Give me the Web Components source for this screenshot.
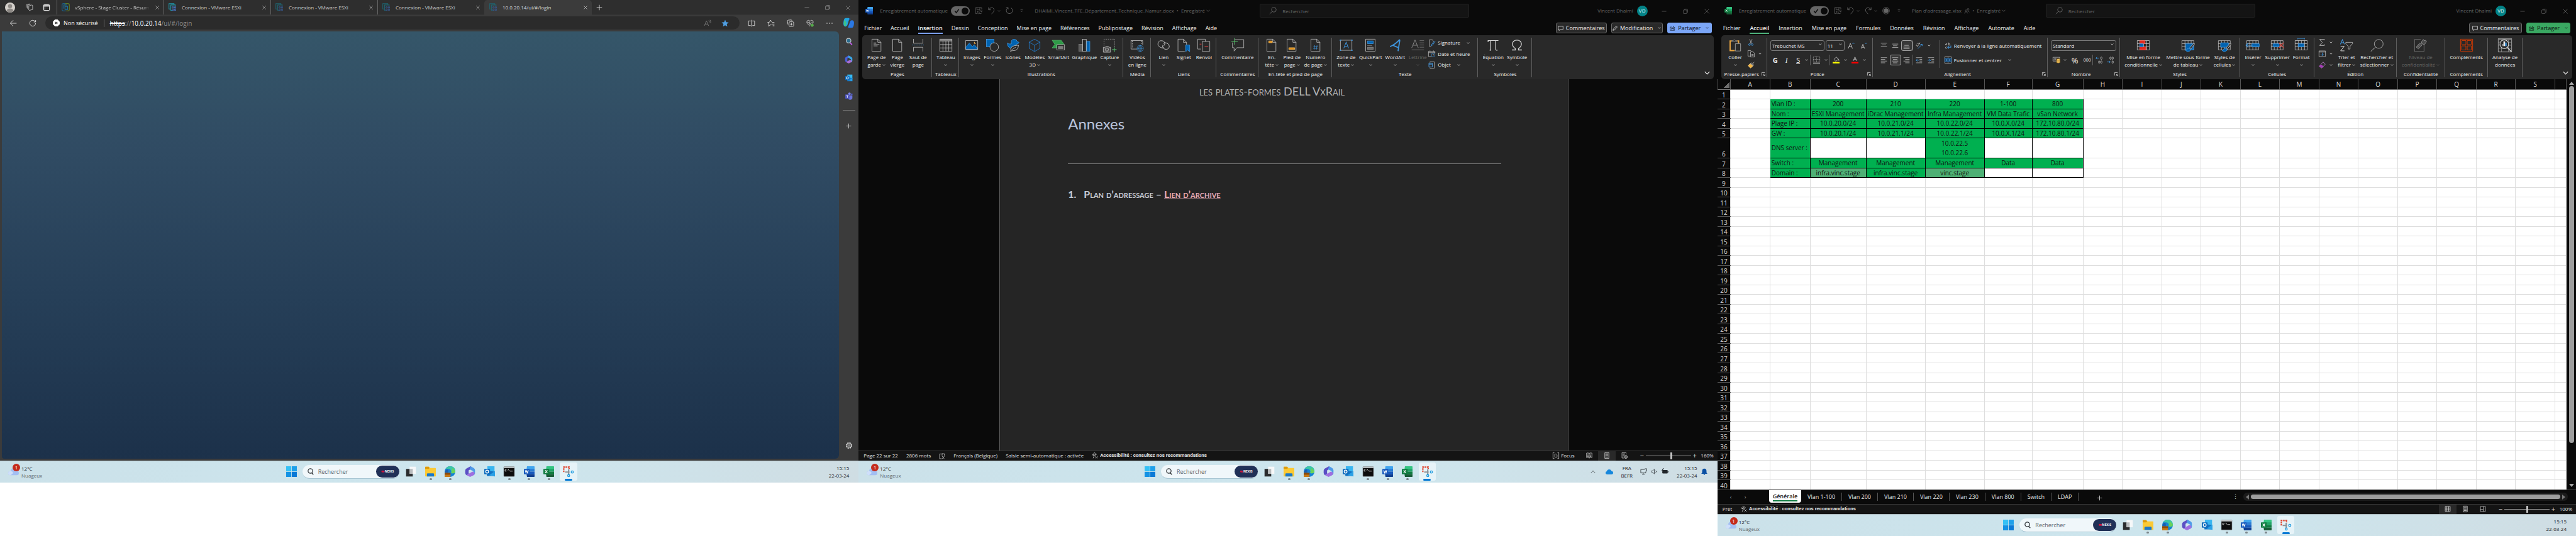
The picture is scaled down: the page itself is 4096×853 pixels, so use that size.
<!DOCTYPE html>
<html lang="fr">
<head>
<meta charset="utf-8">
<title>Bureau trois écrans</title>
<style>
  html, body { margin: 0; height: 100%; background: #fff; }
  body { font: 8px/12px "Open Sans", "Noto Sans", sans-serif; overflow: hidden; }
</style>
</head>
<body>
<desk-wall>
  <desk-screen slot="a"><edge-window></edge-window><win-taskbar></win-taskbar></desk-screen>
  <desk-screen slot="b"><word-window></word-window><win-taskbar tray></win-taskbar></desk-screen>
  <desk-screen slot="c"><excel-window></excel-window><win-taskbar></win-taskbar></desk-screen>
</desk-wall>

<script>
/* ---------- icon library: name -> [viewBox width, height, markup] ---------- */
const S = '#d6d6d6', B = '#0063b1', L = '#4ba0e8';
const page = `<path d="M3.5.5h13l7 7v20h-20z" fill="none" stroke="${S}"/><path d="M16.5.5v7h7" fill="none" stroke="${S}"/>`;
const grid = `<path d="M.5 3.5h27v21H.5zM7.500 3.500v21M14.500 3.500v21M21.500 3.500v21M.5 10.500h27M.5 17.500h27" fill="none" stroke="${S}"/>`;
const brush = `<path d="M27 10 18 20l2.500 3L29 12q1-3-2-2z" fill="#292929" stroke="${S}"/><path d="M17 21q-4-1-5 3-1 2-3 2 4 4 8 2 4-2 3-5z" fill="${B}" stroke="${L}"/>`;
const lines = (a) => `<path d="${a.map(([x, y, w]) => `M${x} ${y}h${w}`).join('')}" stroke="${S}" fill="none"/>`;
const esx = `<g fill="none"><path d="M12 3V1H1v12h2" stroke="var(--c1,#1f9db0)" stroke-width="1.500"/><path d="M15 6V4H5v12h2" stroke="var(--c1,#1f9db0)" stroke-width="1.500"/><path d="M8 8h3v3H8zM13 8h3v3h-3zM8 13h3v3H8zM13 13h3v3h-3z" stroke="var(--c2,#4a78c8)" stroke-width="1.300"/></g>`;
const ICONS = {
  caret: [6, 4, `<path d="M.8.8 3 3 5.200.8" fill="none" stroke="currentColor" stroke-width="1.100"/>`],
  chevdown: [12, 8, `<path d="M1 1.500 6 6.500 11 1.500" fill="none" stroke="currentColor" stroke-width="1.600"/>`],
  min: [14, 14, `<path d="M2 7h10" stroke="currentColor"/>`],
  restore: [14, 14, `<rect x="2" y="4" width="8" height="8" rx="1.500" fill="none" stroke="currentColor"/><path d="M4.500 4V3Q4.500 2 6 2h4.500Q12 2 12 3.500V9q0 1-1.500 1" fill="none" stroke="currentColor"/>`],
  close: [14, 14, `<path d="M2 2l10 10M12 2 2 12" stroke="currentColor" stroke-width="1.100"/>`],
  plus: [14, 14, `<path d="M7 1v12M1 7h12" stroke="currentColor" stroke-width="1.200"/>`],
  avatar: [22, 22, `<circle cx="11" cy="11" r="11" fill="#d4d0cb"/><circle cx="11" cy="8" r="4.500" fill="#8e8a86"/><path d="M3.500 18q1-5 7.500-5t7.500 5q-3 4-7.500 4t-7.500-4z" fill="#8e8a86"/>`],
  spaces: [18, 18, `<g fill="none" stroke="#c4c4c4" stroke-width="1.200"><path d="M8 6l7-2 1.500 1v9L9 16l-1-1z"/><path d="M5 12V5l7-3M2.500 10V4L9 1.500"/></g>`],
  tabact: [18, 18, `<rect x="2" y="2" width="14" height="14" rx="2" fill="none" stroke="#fff" stroke-width="1.500"/><path d="M2 5h14" stroke="#fff" stroke-width="3"/><path d="M5 5v11" stroke="#fff" stroke-width="1"/>`],
  vsphere: [18, 18, `<g fill="none" stroke-width="1.700"><path d="M10 17H4q-3 0-3-3V4q0-3 3-3h4" stroke="#1d5f86"/><path d="M8 1h6q3 0 3 3v10q0 3-3 3h-4" stroke="#5d7a26"/><path d="M11 4H5v8M7.500 7H13v7H7.500z" stroke="#1d6f9a"/></g>`],
  esxi: [18, 18, esx],
  back: [18, 18, `<path d="M17 9H2M9 2 2 9l7 7" fill="none" stroke="#e8e8e8" stroke-width="1.300"/>`],
  reload: [18, 18, `<path d="M16 9a7 7 0 1 1-2.500-5.500L16 6M16 1.500V6h-4.500" fill="none" stroke="#e8e8e8" stroke-width="1.300"/>`],
  unsafe: [16, 16, `<path d="M5 0h6l5 5v6l-5 5H5l-5-5V5z" fill="#fff"/><path d="M5.500 5.500l5 5M10.500 5.500l-5 5" stroke="#222" stroke-width="1.600"/>`],
  readaloud: [18, 18, `<path d="M1.500 15 6.500 3l5 12M3 11h7M12 2q2 2 1.500 5M15 1q2.500 3 1.500 8" fill="none" stroke="#8b8b8b" stroke-width="1.100"/>`],
  star: [18, 18, `<path d="M9 .8l2.500 5.500 6 .7-4.500 4 1.200 6L9 14l-5.200 3L5 11 .5 7l6-.7z" fill="#4f9de0"/>`],
  split: [18, 18, `<g fill="none" stroke="#e4e4e4" stroke-width="1.300"><path d="M7 3.500H1.700v11H7M11 3.500h5.300v11H11M9 1v16"/></g>`],
  favs: [18, 18, `<path d="M10 12 7 13.500 3 16l1-5L1 7l4.500-.8L8 1.500l2 4M11 7h6M12 11h5M13 15h4" fill="none" stroke="#e4e4e4" stroke-width="1.300"/>`],
  coll: [18, 18, `<g fill="none" stroke="#e4e4e4" stroke-width="1.300"><rect x="5.500" y="5.500" width="11" height="11" rx="2"/><path d="M11 8v6M8 11h6M3 12 1.500 4Q1.500 2 3.500 1.700L11 1l1.500 2"/></g>`],
  health: [18, 18, `<path d="M9 16 2 9Q0 3 5 2q3 0 4 2 1-2 4-2 5 1 3 7l-1 1M1 8h4l2-3 2 7 2-4h4" fill="none" stroke="#e4e4e4" stroke-width="1.200"/><circle cx="14" cy="14" r="3.700" fill="#55a84b"/>`],
  dots: [18, 18, `<g fill="#e4e4e4"><rect x="2" y="8" width="2" height="2"/><rect x="8" y="8" width="2" height="2"/><rect x="14" y="8" width="2" height="2"/></g>`],
  copilot: [24, 24, `<path d="M6 1h6q2 0 1 3l-4 13q-1 3-4 3-5 0-5-7 0-6 2-10Q3 1 6 1z" fill="#22a7e0"/><path d="M1 13q0-5 2-9l4 8-2 8Q1 19 1 13z" fill="#3cc28c"/><path d="M18 23h-6q-2 0-1-3l4-11q1-3 4-3 5 0 5 6 0 5-2 9-1 2-4 2z" fill="#2a78e4"/><path d="M14 1q2 0 2 4h-4z" fill="#1a5fb4"/>`],
  lens: [18, 18, `<circle cx="8" cy="7" r="5.500" fill="#2c6d8e" stroke="#b9c0c4" stroke-width="2"/><path d="M12 12l4 5" stroke="#c05bec" stroke-width="3"/>`],
  m365: [18, 18, `<path d="M9 .5 2.500 4Q1 5 1 7v4q0 3 2 4l3-2V7l6-3z" fill="#4a5fd6"/><path d="M9 .5 15.500 4Q17 5 17 7v5q0 3-3 4V9L8 5z" fill="#3aa6e8"/><path d="M3 15l6 3 6-3q1-1 1-3l-4-2-6 3z" fill="#a86fd6"/><path d="M7 7l4 2.500L7 12z" fill="#3b3b3b"/>`],
  outlook: [18, 18, `<path d="M5 1h12v10H5z" fill="#35b8f1"/><path d="M4 8l13 1v8H5z" fill="#1579c9"/><path d="M17 9 9 15l8 2z" fill="#28a0e4"/><rect y="4" width="10" height="10" rx="1" fill="#0f6cbd"/><circle cx="5" cy="9" r="2.600" fill="none" stroke="#fff" stroke-width="1.500"/>`],
  teams: [18, 18, `<circle cx="10" cy="3.500" r="3" fill="#7b83eb"/><circle cx="15.500" cy="4.500" r="2" fill="#5059c9"/><path d="M6 7h11v6q0 4-5 4.500Q6 17 6 13z" fill="#6a73dc"/><rect y="5" width="10" height="10" rx="1" fill="#4b53bc"/><path d="M2.500 8h5M5 8v5" stroke="#fff" stroke-width="1.400"/>`],
  gear: [18, 18, `<circle cx="9" cy="9" r="6.500" fill="none" stroke="#ddd" stroke-width="2.200" stroke-dasharray="3.400 1.700"/><circle cx="9" cy="9" r="5" fill="none" stroke="#ddd"/><circle cx="9" cy="9" r="2" fill="none" stroke="#ddd"/>`],
  /* taskbar */
  start: [24, 24, `<path d="M0 0h11.400v11.400H0z" fill="#35c1f5"/><path d="M12.600 0H24v11.400H12.600z" fill="#1ea0ea"/><path d="M0 12.600h11.400V24H0z" fill="#1492e4"/><path d="M12.600 12.600H24V24H12.600z" fill="#0a79d6"/>`],
  mag: [16, 16, `<circle cx="8" cy="6.500" r="5.300" fill="none" stroke="#2b2f33" stroke-width="1.800"/><path d="M11 11l4 4" stroke="#2b2f33" stroke-width="2"/>`],
  cloud: [26, 18, `<path d="M6 17q-6 0-6-5t6-5q1-7 8-7 6 0 7 6 5 1 5 6 0 5-5 5z" fill="#a3bff2"/><path d="M6 17q-6 0-6-5t6-5q5 0 6 5z" fill="#cfdffa"/>`],
  taskview: [24, 24, `<rect x="1" y="6" width="15" height="17" fill="#2a2c2e"/><rect x="9" y="1" width="14" height="16" fill="#f6f8f9"/><rect x="9" y="6" width="7" height="11" fill="#b9bcbe"/>`],
  folder: [24, 24, `<path d="M0 2q0-1 1-1h7l3 3h12q1 0 1 1v17q0 1-1 1H1q-1 0-1-1z" fill="#fbc934"/><path d="M0 2q0-1 1-1h7l2 3-2 2H0z" fill="#dd9a0d"/><path d="M4 23v-5q0-2 2-2h12q2 0 2 2v5z" fill="#1b78c9"/>`],
  edge: [24, 24, `<circle cx="12" cy="12" r="12" fill="#1683d2"/><path d="M2 6Q6 0 12 0q12 0 12 11 0 5-6 5-5 0-3-4-1-6-7-6-4 0-6 0z" fill="#3fc6a6"/><path d="M24 11q0 5-6 5-4 0-3-3l3-9z" fill="#6ad25a"/><path d="M8 12q0 8 6 12Q4 24 1 16q-2-6 4-9 4 0 3 5z" fill="#1a5fb0"/><path d="M0 15h13v9H0z" fill="#c77a16"/><path d="M0 15h13v4H0z" fill="#8a4b0c"/>`],
  office: [24, 24, `<path d="M13 0 4 5Q1 7 1 10v5q0 3 3 5l5-3V9l8-5z" fill="#5b4fc4"/><path d="M13 0l7 4q3 2 3 5v6q0 4-4 5v-9l-8-4z" fill="#4f9be8"/><path d="M4 20l8 4 8-4q3-2 2-6l-5-2-8 5z" fill="#9f6fe0"/><path d="M9 9l6 3-6 4z" fill="#cfe5ed"/>`],
  mail: [24, 24, `<path d="M7 0h16v12H7z" fill="#39b6f0"/><path d="M5 10l19 2v10H6z" fill="#1475c5"/><path d="M24 11 11 20l13 3z" fill="#2aa1e6"/><rect y="6" width="13" height="12" rx="1" fill="#0f6cbd"/><circle cx="6.500" cy="12" r="3.200" fill="none" stroke="#fff" stroke-width="1.800"/>`],
  cmd: [24, 24, `<rect x="0" y="1" width="24" height="22" rx="1" fill="#0d0d0d" stroke="#8a8f93"/><path d="M0 1h24v3H0z" fill="#c5cacc"/><path d="M3 8h3M3 8v3h3M8 8v1M10 7l3 4M14 11h6" stroke="#e6e6e6" stroke-width="1.200" fill="none"/>`],
  word: [24, 24, `<path d="M7 0h16q1 0 1 1v6H6z" fill="#41a5ee"/><path d="M6 6h18v6H6z" fill="#2b7cd3"/><path d="M6 12h18v6H6z" fill="#185abd"/><path d="M6 18h18v5q0 1-1 1H7z" fill="#103f91"/><rect y="6" width="13" height="12" rx="1" fill="#185abd"/><path d="M3 9l1.700 6L6.500 10l1.800 5L10 9" fill="none" stroke="#fff" stroke-width="1.500"/>`],
  excel: [24, 24, `<path d="M7 0h16q1 0 1 1v6H6z" fill="#33c481"/><path d="M6 6h18v6H6z" fill="#21a366"/><path d="M6 12h18v6H6z" fill="#107c41"/><path d="M6 18h18v5q0 1-1 1H7z" fill="#185c37"/><rect y="6" width="13" height="12" rx="1" fill="#107c41"/><path d="M4 9l5 6M9 9l-5 6" fill="none" stroke="#fff" stroke-width="1.700"/>`],
  snip: [24, 24, `<path d="M2 13V2h12v4" fill="none" stroke="#e0402a" stroke-width="3" stroke-dasharray="3.500 1.500"/><path d="M5 13h10M13 7v12" stroke="#8c9297" stroke-width="3"/><circle cx="21" cy="13" r="2.500" fill="none" stroke="#1e9be0" stroke-width="1.800"/><circle cx="13" cy="21" r="2.300" fill="none" stroke="#1e9be0" stroke-width="1.800"/>`],
  up: [12, 8, `<path d="M1 7l5-5 5 5" fill="none" stroke="#2b3034" stroke-width="1.500"/>`],
  onedrive: [18, 12, `<path d="M4 12q-4 0-4-4 0-3 3-3.500Q4 0 9 0q4 0 5 4 4 0 4 4t-4 4z" fill="#1687dc"/>`],
  net: [18, 18, `<path d="M12 3.500H1.500v9h13V9M5 16h7M8 12.500V16M12 1.500h5v4h-1.500V9" fill="none" stroke="#23282c" stroke-width="1.300"/>`],
  mute: [18, 18, `<path d="M2 7h3l4-4v12l-4-4H2zM12 7l4 4M16 7l-4 4" fill="none" stroke="#23282c" stroke-width="1.200"/>`],
  battery: [18, 18, `<rect x="2" y="5" width="14" height="9" rx="2" fill="#23282c"/><rect x="16" y="8" width="2" height="3" fill="#23282c"/><path d="M5 0 1 7h4L3 13" fill="none" stroke="#23282c" stroke-width="1.800"/>`],
  bell: [14, 16, `<path d="M7 1q5 0 5 6v3l2 3H0l2-3V7q0-6 5-6zM5 14h4q-.5 2-2 2t-2-2z" fill="#0a4fa3"/>`],
  /* office title bar */
  save: [18, 18, `<path d="M6 16H2.500Q1.500 16 1.500 15V2.500q0-1 1-1h13q1 0 1 1V6M5 1.500V7h7V1.500M6 16v-5h2" fill="none" stroke="currentColor" stroke-width="1.200"/><path d="M9 11q3-4 7-1M17 8v3h-3M17 14q-3 4-7 1M9 17v-3h3" fill="none" stroke="currentColor" stroke-width="1.200"/>`],
  undo: [16, 18, `<path d="M1 1v6h6M1.500 6.500Q6 0 11 2q5 3 3 8-1 2-6 7" fill="none" stroke="currentColor" stroke-width="1.300"/>`],
  redo: [16, 18, `<path d="M15 1v6H9M14.500 6.500Q10 0 5 2 0 5 2 10q1 2 6 7" fill="none" stroke="currentColor" stroke-width="1.300"/>`],
  repeat: [18, 18, `<path d="M5 2Q1 5 1.500 10q1 6 7.500 6t7.500-6Q17 5 13 2M1 1.500h5V6" fill="none" stroke="currentColor" stroke-width="1.300"/>`],
  record: [18, 18, `<circle cx="9" cy="9" r="8" fill="none" stroke="currentColor" stroke-width="1.200"/><circle cx="9" cy="9" r="5.800" fill="currentColor"/>`],
  more: [8, 8, `<path d="M1 1h6M1.500 3.500 4 6l2.500-2.500" fill="none" stroke="currentColor" stroke-width="1.100"/>`],
  people: [14, 14, `<circle cx="10" cy="3" r="2.300" fill="none" stroke="currentColor"/><circle cx="5" cy="6.500" r="2.300" fill="none" stroke="currentColor"/><path d="M1 13q1-4 4-4t4 4M9 8q3-1 4 2" fill="none" stroke="currentColor"/>`],
  search: [16, 16, `<circle cx="10" cy="6" r="5" fill="none" stroke="currentColor" stroke-width="1.200"/><path d="M6.500 9.500 1 15" stroke="currentColor" stroke-width="1.200"/>`],
  bubble: [14, 12, `<path d="M1 1h12v8H6l-3 2.500V9H1z" fill="none" stroke="currentColor" stroke-width="1.200"/>`],
  pen: [12, 12, `<path d="M1 11l1-3.500L9 .8 11.200 3 4.500 10z" fill="none" stroke="currentColor" stroke-width="1.200"/>`],
  share: [14, 12, `<path d="M5 3H1v8h11V8M4 8q1-4 5-4V1.500L13 5 9 8.500V6.500Q6 6 4 8z" fill="none" stroke="currentColor" stroke-width="1.100"/>`],
  check: [10, 10, `<path d="M1.500 5 4 8l4.500-6" fill="none" stroke="#111" stroke-width="1.700"/>`],
  /* word ribbon */
  cover: [28, 28, page + `<path d="M7 8h6v2.500H7z" fill="#8a8a8a"/>` + lines([[7, 12.500, 13], [7, 15.500, 9]])],
  blank: [28, 28, page],
  pagebreak: [28, 28, `<path d="M3.500 0v9.500h21V0M3.500 28V18.500h21V28" fill="none" stroke="${S}"/><path d="M0 13.500h28" stroke="#3f95dd" stroke-dasharray="2.500 1.500"/>`],
  table: [28, 28, `<path d="M.5.5h27v4H.5z" fill="#6e6e6e"/><path d="M.5.5h27v27H.5zM.5 4.500h27M7.500 4.500v23M14 4.500v23M20.500 4.500v23M.5 12.500h27M.5 20h27" fill="none" stroke="${S}"/>`],
  image: [28, 28, `<path d="M1 23V18l8-9 6 8 5-4 7 8v2z" fill="${B}" stroke="${L}"/><path d="M.5 3.500h27v20H.5z" fill="none" stroke="${S}"/><path d="M21 6q-1 4 3 4-4 2-5-1 0-2 2-3z" fill="#f0b050"/>`],
  shapes: [28, 28, `<rect x=".5" y=".5" width="17" height="17" fill="${B}" stroke="${L}"/><circle cx="18" cy="18" r="9.500" fill="#292929" stroke="${S}"/>`],
  icons: [28, 28, `<path d="M1 9q3 3 9 2Q8 1 16 .6q6 0 7 5l4 2q-1 4-6 4 1 8-8 10Q1 21 1 9z" fill="${B}" stroke="${L}"/><path d="M9 27q-4-13 17-13-1 13-13 12zM7 28q7-7 13-10" fill="#292929" stroke="${S}"/>`],
  cube: [28, 28, `<path d="M14 .6 26 7v14l-12 7L2 21V7zM2 7l12 7 12-7M14 14v14" fill="none" stroke="#2479c7" stroke-width="1.300"/>`],
  smartart: [28, 28, `<path d="M0 3h20l6 8-8 9H0l6-8z" fill="#2f9a48" stroke="#58c06c"/><path d="M10.500 12.500h17v12h-17z" fill="#292929" stroke="${S}"/>` + lines([[13, 16.500, 12], [13, 18.500, 12], [13, 21.500, 12]])],
  chart: [28, 28, `<rect x="2" y="12" width="8" height="15.500" fill="#5d5d5d" stroke="#8a8a8a"/><rect x="18.500" y="5.500" width="8" height="22" fill="${B}" stroke="${L}"/><rect x="10.500" y=".5" width="8" height="27" fill="#292929" stroke="${S}"/>`],
  capture: [28, 28, `<path d="M26 18V.5H2V15" fill="none" stroke="#a5a5a5" stroke-dasharray="3 2"/><path d="M.5 18.500h4l2-2h5l2 2h3v11H.5z" fill="#4d4d4d" stroke="${S}"/><circle cx="8.500" cy="23.500" r="3.500" fill="none" stroke="${S}"/><path d="M20 24h10M25 19v10" stroke="#58c06c" stroke-width="1.500"/>`],
  video: [28, 28, `<path d="M14 22.500H.5v-19h26V13" fill="none" stroke="${S}"/><path d="M3.500 5v16M23.500 5v8" stroke="${S}" stroke-width="2" stroke-dasharray="1.500 2.500"/><circle cx="21" cy="21" r="7" fill="#292929" stroke="#3f95dd"/><path d="M14 21h14M21 14v14M21 14q-7 7 0 14M21 14q7 7 0 14" fill="none" stroke="#3f95dd"/>`],
  link: [28, 28, `<path d="M15 18q-3 4-7 1-8-4-6-10 2-6 8-5 6 0 7 6 0 3-2 5M13 10q4-3 8-1 7 3 6 8-1 6-7 6-7 0-8-6 0-2 1-4" fill="none" stroke="${S}" stroke-width="1.200"/>`],
  bookmark: [28, 28, `<path d="M16.500 27.500h-15V.5h12l7 7v5M13.500.5v7h7" fill="none" stroke="${S}"/><path d="M18.500 13.500h9v15l-4.500-4-4.500 4z" fill="${B}" stroke="${L}"/>`],
  crossref: [28, 28, `<path d="M8 22.500H.5V.5h17v5M10.500 5.500h17v22h-17z" fill="none" stroke="${S}"/><path d="M5 11.500h4M16 16.500h8" stroke="#ee4444" stroke-width="1.300"/>`],
  comment: [28, 28, `<path d="M7 1.500h20.500v18H12L6 27v-7.500H2.500V8" fill="none" stroke="${S}"/><path d="M0 5.500h14M7-2v15" stroke="#58c06c" stroke-width="1.400"/>`],
  header: [28, 28, page + `<path d="M7.500 4.500h8v4h-8z" fill="#e08e1b" stroke="#ffc760"/>`],
  footer: [28, 28, page + `<path d="M7.500 19.500h13v4h-13z" fill="#e08e1b" stroke="#ffc760"/>`],
  pagenum: [28, 28, page + `<path d="M12 14l-1.500 10M17 14l-1.500 10M9 17h10M8.500 21h10" stroke="#3f95dd" fill="none"/>`],
  textbox: [30, 28, `<path d="M2 2.500h26v23H2z" fill="none" stroke="${S}"/><path d="M.5 1h3v3h-3zM26.500 1h3v3h-3zM.5 24h3v3h-3zM26.500 24h3v3h-3z" fill="#3f95dd"/><path d="M9.500 21 15 7l5.500 14M11.500 16h7" fill="none" stroke="#3f95dd" stroke-width="1.500"/>`],
  quick: [28, 28, `<path d="M3.500.5h21v27h-21z" fill="none" stroke="${S}"/><path d="M7.500 4.500h13v6h-13z" fill="${B}" stroke="${L}"/><path d="M7 14.500h11" stroke="#999"/><path d="M7.500 18.500h13v5h-13z" fill="#6a6a6a" stroke="#999"/>`],
  wordart: [28, 28, `<path d="M3 17Q14 13 24 2q1 0 .5 3L21 27M9 14l12 5" fill="none" stroke="#3f95dd" stroke-width="2.600"/>`],
  dropcap: [30, 28, `<path d="M1 20 8.500 2 16 20M4 14h9" fill="none" stroke="#8b8b8b" stroke-width="1.400"/><path d="M19 3.500h10M19 8.500h10M19 13.500h10M19 18.500h10M1 24.500h28" stroke="#8b8b8b"/>`],
  sign: [16, 16, `<path d="M7 15.500H2.500V.5h7l3 4" fill="none" stroke="${S}"/><path d="M14.500 3 8 11l-1 3 3-1.500L16 5" fill="none" stroke="#3f95dd" stroke-width="1.400"/>`],
  datetime: [16, 16, `<path d="M8 14.500H.5v-12h15V7M.5 5.500h15M4 .5v3M12 .5v3" fill="none" stroke="${S}"/><circle cx="11.500" cy="11" r="4.200" fill="#292929" stroke="#3f95dd"/><path d="M11.500 8.500V11h2" fill="none" stroke="${S}"/>`],
  object: [16, 16, `<path d="M4 2.500V.5h10v15H4v-2" fill="none" stroke="${S}"/><path d="M1.500 3.500h8v9h-8zM1.500 6h8" fill="none" stroke="${L}" stroke-width="1.300"/>`],
  pi: [28, 28, `<path d="M3 7V3.500h23M9 4v21H6.500M20 4v19q0 2.500 4 2" fill="none" stroke="${S}" stroke-width="1.700"/>`],
  omega: [28, 28, `<path d="M3 24.500h7.500v-3Q4 17 4 11q1-8.500 10-8.500T24 11q0 6-6.500 10.500v3H25" fill="none" stroke="${S}" stroke-width="1.800"/>`],
  /* excel ribbon */
  paste: [28, 32, `<path d="M6 4.500H1.500v24H13M19 4.500h3.500V10" fill="none" stroke="#eba640" stroke-width="3"/><path d="M6 6.500v-3h3q3-4 6 0h3v3z" fill="#292929" stroke="#a5a5a5"/><path d="M14.500 11.500h13v18h-13z" fill="#292929" stroke="${S}"/>`],
  cut: [14, 16, `<path d="M4 .5l5 11M10 .5l-5 11" stroke="${S}" fill="none"/><circle cx="3.800" cy="13" r="2" fill="none" stroke="#3f95dd" stroke-width="1.300"/><circle cx="10.200" cy="13" r="2" fill="none" stroke="#3f95dd" stroke-width="1.300"/>`],
  copy: [16, 16, `<path d="M5 13.500H.5V.5h6l2 2M6.500 3.500h6l3 3v9h-9zM8.500 9.500h5M8.500 12h5" fill="none" stroke="${S}"/>`],
  painter: [16, 16, `<path d="M15 1l-5 6M12 10 6 4l2-1 6 5z" fill="none" stroke="${S}"/><path d="M5.500 5 1 9q3 5 6 6l5-5z" fill="#f0b040" stroke="#ffdf90"/>`],
  launch: [8, 8, `<path d="M.5 7V.5H7M3 3l4 4M7 3.500V7H3.500" fill="none" stroke="#ddd"/>`],
  growfont: [16, 16, `<path d="M1 15 6 3l5 12M3 11h6" fill="none" stroke="${S}" stroke-width="1.200"/><path d="M11 4l2-2.500L15 4" fill="none" stroke="#3f95dd" stroke-width="1.200"/>`],
  shrinkfont: [16, 16, `<path d="M2 15 6 5l4 10M3.500 12h5" fill="none" stroke="${S}" stroke-width="1.200"/><path d="M11 1.500 13 4l2-2.500" fill="none" stroke="#3f95dd" stroke-width="1.200"/>`],
  borders: [16, 16, `<path d="M.5.500h15v12H.5zM8 .5v12M.5 6.500h15" fill="none" stroke="${S}" stroke-dasharray="1 1"/><path d="M0 15h16" stroke="#fff" stroke-width="1.500"/>`],
  fill: [16, 16, `<path d="M3 6l6-5 4 6-6 4zM13 5q2 2 1.500 5" fill="none" stroke="${S}"/><path d="M0 12.500h16V16H0z" fill="#ff0"/>`],
  fontcolor: [16, 16, `<path d="M4 10 8 .8 12 10M5.500 7h5" fill="none" stroke="${S}" stroke-width="1.200"/><path d="M0 12.500h16V16H0z" fill="#f00"/>`],
  vtop: [16, 16, lines([[1, 2.500, 14], [3, 6.500, 10], [1, 10.500, 14]])],
  vmid: [16, 16, lines([[1, 4.500, 14], [3, 8.500, 10], [1, 12.500, 14]])],
  vbot: [16, 16, lines([[3, 7.500, 10], [1, 11.500, 14], [1, 15, 14]])],
  hleft: [16, 16, lines([[1, 2.500, 14], [1, 6.500, 10], [1, 10.500, 14], [1, 14.500, 10]])],
  hcenter: [16, 16, lines([[1, 2.500, 14], [3, 6.500, 10], [1, 10.500, 14], [3, 14.500, 10]])],
  hright: [16, 16, lines([[1, 2.500, 14], [5, 6.500, 10], [1, 10.500, 14], [5, 14.500, 10]])],
  orient: [16, 16, `<path d="M2 5l3-3M1 8l4 1M6 3l4 1M4 11 10 1" fill="none" stroke="${S}"/><path d="M5 15 15 5M15 9V5h-4" fill="none" stroke="#3f95dd" stroke-width="1.400"/>`],
  outdent: [16, 16, lines([[1, 2.500, 14], [9, 6.500, 6], [9, 10.500, 6], [1, 14.500, 14]]) + `<path d="M8 8.500H1M4 5.500l-3 3 3 3" fill="none" stroke="#3f95dd" stroke-width="1.300"/>`],
  indent: [16, 16, lines([[1, 2.500, 14], [9, 6.500, 6], [9, 10.500, 6], [1, 14.500, 14]]) + `<path d="M0 8.500h7M4 5.500l3 3-3 3" fill="none" stroke="#3f95dd" stroke-width="1.300"/>`],
  wrap: [16, 16, `<path d="M5 3v4M2 7q-1-3 3-3M9 1v6M9 4q4-1 3.500 1.500T9 7M5 11q-3 0-3 2t3 2" fill="none" stroke="${S}"/><path d="M14.500 8v4H7M10 9.500 7 12l3 3" fill="none" stroke="#3f95dd" stroke-width="1.500"/>`],
  merge: [16, 16, `<path d="M.5.500h15v15H.5zM8 .5v3M8 12.500v3" fill="none" stroke="${S}"/><path d="M.5 4h15v8H.5z" fill="#14446e" stroke="#3f95dd"/><path d="M3 8h10M5 6 3 8l2 2M11 6l2 2-2 2" fill="none" stroke="#7fc3ff"/>`],
  money: [18, 16, `<path d="M9 10.500H.5v-9h16V5M5 4q-2 0-2 2t2 2M7 8V4h2" fill="none" stroke="${S}"/><path d="M9.500 6q4-2 7.500 0v8q-4 2-7.500 0z" fill="#f3c968" stroke="#b07d1c"/><path d="M9.500 9h7.500M9.500 12h7.500" stroke="#b07d1c"/>`],
  dec1: [16, 16, `<path d="M8 3.500H1M3.500 1 1 3.500 3.500 6" fill="none" stroke="#3f95dd" stroke-width="1.300"/><rect x="12" y="1" width="3" height="5.500" rx="1.500" fill="none" stroke="${S}"/><rect x="7" y="10" width="3" height="5.500" rx="1.500" fill="none" stroke="${S}"/><rect x="12" y="10" width="3" height="5.500" rx="1.500" fill="none" stroke="${S}"/>`],
  dec2: [16, 16, `<rect x="7" y="1" width="3" height="5.500" rx="1.500" fill="none" stroke="${S}"/><rect x="12" y="1" width="3" height="5.500" rx="1.500" fill="none" stroke="${S}"/><rect x="12" y="10" width="3" height="5.500" rx="1.500" fill="none" stroke="${S}"/><path d="M0 12.500h8M5.500 10 8 12.500 5.500 15" fill="none" stroke="#3f95dd" stroke-width="1.300"/>`],
  condfmt: [28, 28, grid + `<path d="M6 3.500h12v7H6zM6 17.500h14v7H6z" fill="#e02b20" stroke="#ff6a5e"/><path d="M6 10.500h8v7H6z" fill="${B}" stroke="${L}"/>`],
  tablefmt: [30, 28, grid + `<path d="M9 10.500h18.500v14H9z" fill="${B}" stroke="${L}"/>` + brush],
  cellfmt: [30, 28, grid + `<path d="M5.500 8.500h18v10h-18z" fill="${B}" stroke="${L}"/>` + brush],
  insert: [30, 28, grid + `<path d="M12 10.500h17v7H12z" fill="${B}" stroke="${L}"/><path d="M14 14H-1M4 9l-5 5 5 5" fill="none" stroke="${L}" stroke-width="1.600"/>`],
  remove: [30, 28, grid + `<path d="M4.500 10.500h14v7h-14z" fill="${B}" stroke="${L}"/><path d="M18 8l11 12M29 8 18 20" stroke="#e0443a" stroke-width="1.600"/>`],
  format: [28, 28, grid + `<path d="M7.500 10.500h13v7h-13z" fill="${B}" stroke="${L}"/><path d="M6-.5h16M6.500-2v3M21.500-2v3" stroke="#3f95dd"/>`],
  sum: [16, 16, `<path d="M13 3V1H2l6 7-6 7h11v-2.500" fill="none" stroke="${S}" stroke-width="1.200"/>`],
  filldown: [16, 16, `<path d="M.5 1.500h15v13H.5zM.5 4h15" fill="none" stroke="${S}"/><path d="M8 5.500V12M5 9.500l3 3 3-3" fill="none" stroke="#3f95dd" stroke-width="1.400"/>`],
  erase: [16, 16, `<path d="M10 1l5 5-8 9-6-4z" fill="none" stroke="#c98fd6" stroke-width="1.200"/><path d="M5 6l6 5-4 4-6-4z" fill="#a23bb5"/>`],
  sortfilter: [28, 28, `<path d="M.5 12 5 1.500 9.500 12M2 8.500h6" fill="none" stroke="#3f95dd" stroke-width="1.500"/><path d="M1 16.500h8L1 26.500h8.500" fill="none" stroke="${S}" stroke-width="1.400"/><path d="M12.500 7.500h15v3l-5.500 6v6h-4v-6l-5.500-6z" fill="none" stroke="${S}"/>`],
  find: [30, 28, `<circle cx="19" cy="11" r="10" fill="none" stroke="${S}"/><path d="M12 18 1 28" stroke="${S}" stroke-width="1.200"/>`],
  sensitivity: [28, 28, `<path d="M14 1H.5v27h21V14" fill="none" stroke="#8b8b8b"/><path d="M4 18l8-9 5 5-8 8zM7 18l5-5M16 6l4-5 2 3 3-1 2 3-5 7-6-3z" fill="#4a4a4a" stroke="#8b8b8b" stroke-width="1.400"/>`],
  addins: [28, 28, `<path d="M.5.5h27v27H.5z" fill="none" stroke="#d83b01" stroke-width="1.300"/><path d="M3.500 3.500h9v9h-9zM15.500 3.500h9v9h-9zM3.500 15.500h9v9h-9zM15.500 15.500h9v9h-9z" fill="none" stroke="#d83b01" stroke-width="1.200"/>`],
  analyze: [32, 32, `<path d="M.5.5h31v31H.5z" fill="none" stroke="${S}"/><path d="M1 1h30v3H1z" fill="#7a7a7a"/><path d="M1 9h30M1 16h30M1 23h30M8 4v27M24 4v27" stroke="#9a9a9a"/><circle cx="14.500" cy="13.500" r="10" fill="#292929" stroke="${S}" stroke-width="1.600"/><path d="M9 13h3.500v5H9z" fill="#888"/><path d="M12.500 7h4v11h-4z" fill="#e8e8e8"/><path d="M16.500 10H20v8h-3.500z" fill="#3f95dd"/><path d="M21.500 21 31 31" stroke="${S}" stroke-width="2"/>`],
  /* status bar */
  proof: [14, 14, `<path d="M6 12.500H1.500V2H6l1-1v5M7 2l1-.5h4V6M7 7l5 6M12 7l-5 6" fill="none" stroke="#ddd"/>`],
  access: [14, 14, `<circle cx="6" cy="2.300" r="1.600" fill="none" stroke="#ddd"/><path d="M1 4l4 1.500v3L3 13M11 4 7 5.500v3M8 8l5 5M13 8l-5 5M1.500 5.500 5 7" fill="none" stroke="#ddd" stroke-width="1.100"/>`],
  focus: [14, 14, `<path d="M3.500.5h-3v13h3M10.500.5h3v13h-3M4.500 3.500h3l2 2v5h-5z" fill="none" stroke="#ddd"/>`],
  read: [14, 14, `<path d="M7 2v11M7 2Q4 .5 1 1.500v10Q4 10.500 7 12.500M7 2q3-1.500 6-.5v10q-3-1-6 1M2.500 4h3M2.500 6.500h3M2.500 9h3M8.500 4h3M8.500 6.500h3M8.500 9h3" fill="none" stroke="#ddd"/>`],
  print: [14, 14, `<path d="M2.500.5h9v13h-9zM4 3h6M4 5.500h6M4 8h6M4 10.500h6" fill="none" stroke="#eee"/>`],
  web: [14, 14, `<path d="M6 12.500H1.500V.5h9V5M3.500 3h5M3.500 5.500h4M3.500 8h3" fill="none" stroke="#ddd"/><circle cx="10" cy="10" r="3.400" fill="none" stroke="#ddd"/><path d="M6.500 10h7M10 6.500v7" stroke="#ddd"/>`],
  gridv: [14, 14, `<path d="M1.500 1.500h11v11h-11zM5 1.500v11M9 1.500v11M1.500 5h11M1.500 9h11" fill="none" stroke="#eee"/>`],
  breakv: [14, 14, `<path d="M1.500 1.500h11v11h-11zM1.500 8H8v4.500M8 8V1.500" fill="none" stroke="#ddd"/>`],
};

/* Attaches an open shadow root holding the given styles and markup. */
function mount(el, css, html) {
  const t = document.createElement('template');
  t.innerHTML = `<style>*{box-sizing:border-box}button{font:inherit;color:inherit;background:none;border:0;padding:0;margin:0;white-space:nowrap}${css}</style>${html}`;
  el.attachShadow({ mode: 'open' }).append(t.content.cloneNode(true));
}

class AppIcon extends HTMLElement {
  connectedCallback() {
    if (this.shadowRoot) return;
    const [w, h, body] = ICONS[this.getAttribute('name')];
    const size = +this.getAttribute('size') || 12;
    mount(this, `:host{display:inline-block;flex:none;line-height:0;vertical-align:middle}svg{display:block;overflow:visible}`,
      `<svg viewBox="0 0 ${w} ${h}" height="${size}" width="${Math.round(size * w / h)}" aria-hidden="true">${body}</svg>`);
  }
}
customElements.define('app-icon', AppIcon);
const ic = (n, s, extra = '') => `<app-icon name="${n}" size="${s}" ${extra}></app-icon>`;

class DeskWall extends HTMLElement {
  constructor() {
    super();
    mount(this, `:host{display:grid;grid-template-columns:repeat(3,minmax(0,1fr));grid-template-rows:90vh 10vh;height:100vh}
      ::slotted([slot=c]){grid-row:1/3;grid-column:3}`,
      `<slot name="a"></slot><slot name="b"></slot><slot name="c"></slot>`);
  }
}
customElements.define('desk-wall', DeskWall);

class DeskScreen extends HTMLElement {
  constructor() {
    super();
    mount(this, `:host{display:flex;flex-direction:column;min-width:0;min-height:0;overflow:hidden}
      ::slotted(:first-child){flex:1;min-height:0}`, `<slot></slot>`);
  }
}
customElements.define('desk-screen', DeskScreen);

/* ---------- Windows taskbar ---------- */
class WinTaskbar extends HTMLElement {
  connectedCallback() {
    if (this.shadowRoot) return;
    const tray = this.hasAttribute('tray');
    const apps = [['taskview', ''], ['folder', 'dot'], ['edge', 'dot'], ['office', ''], ['mail', ''], ['cmd', 'dot'], ['word', 'dot'], ['excel', 'dot'], ['snip', 'on']];
    mount(this, `
      :host{display:grid;grid-template-columns:1fr auto 1fr;align-items:center;height:34px;flex:none;background:linear-gradient(90deg,#cbe1e9,#cde6ee 60%,#cfdde3);border-top:1px solid #a9b7bb;color:#1d2226}
      .weather{display:flex;align-items:center;padding-left:13px;gap:4px;line-height:11px;position:relative}
      .weather small{display:block;font-size:8px;color:#5c666c}
      .badge{position:absolute;left:20px;top:-2px;width:12px;height:12px;border-radius:6px;background:#c42b1c;color:#fff;text-align:center;line-height:12px}
      .mid{display:flex;align-items:center}
      .start{width:35px;height:32px}
      .search{width:154px;height:22px;border-radius:11px;background:#f0f7fa;border-bottom:1px solid #a8c6d3;display:flex;align-items:center;gap:7px;padding-left:7px;margin-right:3px}
      input{flex:1;min-width:0;border:0;background:none;outline:0;padding:0;font:9px "Open Sans",sans-serif}
      input::placeholder{color:#5d656b;opacity:1}
      .pill{width:37px;height:19px;border-radius:10px;background:#203057;color:#fff;font-size:5px;font-weight:700;display:flex;align-items:center;justify-content:center}
      .pill b{color:#e0103a;font-size:8px}
      .apps{display:flex;width:282px}
      .apps button{flex:1;height:33px;display:grid;place-items:center;position:relative}
      .apps button.on::before{content:"";position:absolute;inset:2px;background:#e6f3f8;border-radius:3px}
      .apps app-icon{position:relative}
      .dot::after{content:"";position:absolute;bottom:3px;width:4px;height:3px;border-radius:2px;background:#7b8489}
      .on::after{content:"";position:absolute;bottom:2px;width:12px;height:3px;border-radius:2px;background:#0078d4}
      .tray{display:flex;justify-content:flex-end;align-items:center;gap:6px;padding-right:${tray ? 16 : 15}px;line-height:12px}
      .lang{text-align:center;margin:0 6px}.clock{text-align:right;margin-left:7px}`,
      `<div class="weather">${ic('cloud', 12)}<span class="badge">1</span><span>12°C<small>Nuageux</small></span></div>
       <div class="mid"><button class="start" aria-label="Démarrer">${ic('start', 17)}</button>
       <label class="search">${ic('mag', 11)}<input placeholder="Rechercher" aria-label="Rechercher"><span class="pill"><b>∞</b>NEXIS</span></label>
       <div class="apps">${apps.map(([n, c]) => `<button class="${c}" aria-label="${n}">${ic(n, 17)}</button>`).join('')}</div></div>
       <div class="tray">${tray ? `${ic('up', 5)}&nbsp;&nbsp;${ic('onedrive', 8)}<span class="lang">FRA<br>BEFR</span>${ic('net', 11)}${ic('mute', 11)}${ic('battery', 11)}` : ''}<span class="clock">15:15<br>22-03-24</span>${tray ? ic('bell', 11) : ''}</div>`);
  }
}
customElements.define('win-taskbar', WinTaskbar);

/* ---------- Edge ---------- */
class EdgeTab extends HTMLElement {
  constructor() {
    super();
    mount(this, `:host{display:flex;align-items:center;gap:8px;width:170px;height:23px;padding:0 6px 0 7px;border-left:1px solid #666;color:#c9c9c9;font-size:8px}
      :host([active]){background:#3b3b3b;border-left-color:#3b3b3b;border-radius:5px 5px 0 0;color:#d6d6d6;width:171px}
      :host([dim]){--c1:#1f6470;--c2:#38568a}
      span{flex:1;overflow:hidden;white-space:nowrap}
      :host([fade]) span{-webkit-mask:linear-gradient(90deg,#000 90%,transparent)}`,
      `<slot name="icon"></slot><span><slot></slot></span><button aria-label="Fermer l'onglet">${ic('close', 8)}</button>`);
  }
}
customElements.define('edge-tab', EdgeTab);

class EdgeWindow extends HTMLElement {
  constructor() {
    super();
    const tab = (t, i, a = '') => `<edge-tab ${a}><app-icon slot="icon" name="${i}" size="13"></app-icon>${t}</edge-tab>`;
    mount(this, `
      :host{display:grid;grid-template:23px 27px 1fr 3px/3px minmax(0,1fr) 31px;background:#3b3b3b}
      .tabs{grid-area:1/1/2/4;display:flex;align-items:center;background:#2e2e2e;box-shadow:inset 0 -1px #262626}
      .lead{display:flex;width:90px;align-items:center;justify-content:space-between;padding:0 10px 0 8px}
      .new{width:24px;color:#ddd}
      .win{margin-left:auto;display:flex;color:#999}.win button{width:33px}
      .bar{grid-area:2/1/3/4;display:flex;align-items:center;padding-left:5px}
      .bar>button{width:31px;display:grid;place-items:center}
      .url{flex:1;height:21px;border-radius:11px;background:#2b2b2b;display:flex;align-items:center;font-size:9px;padding:0 9px 0 12px;color:#fff;margin:0 3px 0 5px}
      .url i{width:1px;height:12px;background:#666;margin:0 9px}
      .safe{display:flex;gap:6px;align-items:center}
      .addr{flex:1;color:#8d8d8d;font-size:10px}.addr s,.addr b{color:#fff;font-weight:400}
      .url button{width:28px}
      .view{grid-area:3/2;background:linear-gradient(#355669,#304b63 28%,#263f58 62%,#1c314a);border-radius:0 6px 6px 4px}
      .side{grid-area:3/3;display:flex;flex-direction:column;align-items:center;padding:1px 0 7px}
      .side button{height:29px}.side hr{width:20px;border:0;border-top:1px solid #777;margin:8px 0 9px}.side :last-child{margin-top:auto}`,
      `<div class="tabs"><div class="lead">${ic('avatar', 16)}${ic('spaces', 13)}${ic('tabact', 12)}</div>
        ${tab('vSphere - Stage Cluster - Résumé', 'vsphere', 'fade')}${tab('Connexion - VMware ESXi', 'esxi')}${tab('Connexion - VMware ESXi', 'esxi', 'dim')}${tab('Connexion - VMware ESXi', 'esxi', 'dim')}${tab('10.0.20.14/ui/#/login', 'esxi', 'dim active')}
        <button class="new" aria-label="Nouvel onglet">${ic('plus', 10)}</button>
        <div class="win"><button aria-label="Réduire">${ic('min', 10)}</button><button aria-label="Restaurer">${ic('restore', 10)}</button><button aria-label="Fermer">${ic('close', 9)}</button></div></div>
      <div class="bar"><button aria-label="Retour">${ic('back', 12)}</button><button aria-label="Actualiser">${ic('reload', 12)}</button>
        <div class="url"><span class="safe">${ic('unsafe', 11)}Non sécurisé</span><i></i><span class="addr" role="textbox" aria-label="Adresse"><s>https</s>://<b>10.0.20.14</b>/ui/#/login</span>
        <button aria-label="Lecture à voix haute">${ic('readaloud', 12)}</button><button aria-label="Favori">${ic('star', 12)}</button></div>
        ${['split', 'favs', 'coll', 'health', 'dots'].map(n => `<button aria-label="${n}">${ic(n, 12)}</button>`).join('')}<button aria-label="Copilot">${ic('copilot', 17)}</button></div>
      <div class="view"></div>
      <div class="side"><button aria-label="Recherche">${ic('lens', 12)}</button><button aria-label="Microsoft 365">${ic('m365', 13)}</button><button aria-label="Outlook">${ic('outlook', 12)}</button><button aria-label="Teams">${ic('teams', 12)}</button><hr><button aria-label="Ajouter">${ic('plus', 9, 'style="color:#ddd"')}</button><button aria-label="Paramètres">${ic('gear', 12)}</button></div>`);
  }
}
customElements.define('edge-window', EdgeWindow);

/* ---------- Office chrome shared by Word and Excel ---------- */
class OfficeTitle extends HTMLElement {
  constructor() {
    super();
    mount(this, `
      :host{display:flex;align-items:center;height:34px;flex:none;background:#0a0a0a;color:#666;font-size:8px;white-space:nowrap}
      .left{display:flex;align-items:center;width:var(--left);padding-left:11px;flex:none}
      label{display:flex;align-items:center;gap:5px;margin:0 8px 0 11px;flex:none;width:143px;justify-content:space-between}
      .sw{position:relative;display:block;width:30px;height:15px}
      input[type=checkbox]{appearance:none;margin:0;width:30px;height:15px;border-radius:8px;background:#666}
      .sw::after{content:"";position:absolute;right:2px;top:2px;width:11px;height:11px;border-radius:6px;background:#0a0a0a}
      .sw app-icon{position:absolute;left:5px;top:3px}
      .find{width:333px;height:22px;border:1px solid #222;border-radius:2px;background:#141414;display:flex;align-items:center;gap:9px;padding-left:14px}
      .find input{flex:1;border:0;background:none;outline:0;padding:0;font:8px "Open Sans",sans-serif}
      .find input::placeholder{color:#666;opacity:1}
      .user{margin-left:auto;display:flex;align-items:center;gap:6px}
      .av{width:17px;height:17px;border-radius:9px;background:#038387;color:#e8f6f6;display:grid;place-items:center}
      .win{display:flex;margin-left:9px}.win button{width:34px}`,
      `<div class="left"><slot name="logo"></slot><label>Enregistrement automatique<span class="sw"><input type="checkbox" checked>${ic('check', 9)}</span></label><slot></slot></div>
       <div class="find">${ic('search', 12)}<input placeholder="Rechercher" aria-label="Rechercher"></div>
       <div class="user">Vincent Dhaimi<span class="av">VD</span></div>
       <div class="win"><button aria-label="Réduire">${ic('min', 10)}</button><button aria-label="Restaurer">${ic('restore', 10)}</button><button aria-label="Fermer">${ic('close', 10)}</button></div>`);
  }
}
customElements.define('office-title', OfficeTitle);

class RibbonTabs extends HTMLElement {
  connectedCallback() {
    if (this.shadowRoot) return;
    const on = this.getAttribute('selected');
    mount(this, `
      :host{display:flex;height:22px;flex:none;background:#0a0a0a;color:#eee;font-size:9px;padding:0 9px}
      nav{display:flex;gap:var(--gap,14px);align-items:flex-start;padding-top:3px}
      nav button{line-height:15px;border-bottom:2px solid transparent}
      nav .on{font-weight:600;border-color:var(--accent)}
      .acts{margin-left:auto;display:flex;gap:7px;padding-top:2px}`,
      `<nav>${this.getAttribute('tabs').split('|').map(t => `<button class="${t === on ? 'on' : ''}">${t}</button>`).join('')}</nav><div class="acts"><slot></slot></div>`);
  }
}
customElements.define('ribbon-tabs', RibbonTabs);

class PillButton extends HTMLElement {
  connectedCallback() {
    if (this.shadowRoot) return;
    mount(this, `:host{display:block}
      button{display:flex;align-items:center;justify-content:center;gap:4px;width:var(--w);height:17px;border:1px solid #6a6a6a;border-radius:3px;background:#292929;color:#eee}
      :host([fill]) button{background:var(--fill);border-color:var(--fill);color:#0a0a0a}`,
      `<button>${ic(this.getAttribute('icon'), 8)}<slot></slot>${this.hasAttribute('caret') ? `<span></span>${ic('caret', 3)}` : ''}</button>`);
  }
}
customElements.define('pill-button', PillButton);

class RibbonBar extends HTMLElement {
  constructor() {
    super();
    mount(this, `:host{display:block;background:#0a0a0a;padding:0 6px;height:70px;flex:none}
      div{display:flex;height:70px;background:#292929;border-radius:5px;color:#eee;position:relative}
      button{position:absolute;right:6px;bottom:5px}`,
      `<div><slot></slot><button aria-label="Réduire le ruban">${ic('chevdown', 6)}</button></div>`);
  }
}
customElements.define('ribbon-bar', RibbonBar);

class RibbonGroup extends HTMLElement {
  connectedCallback() {
    if (this.shadowRoot) return;
    mount(this, `
      :host{display:flex;flex-direction:column;width:var(--w);flex:none;background:linear-gradient(#5e5e5e,#5e5e5e) right 4px/1px 63px no-repeat}
      .body{flex:1;min-height:0;display:flex;justify-content:center;padding-top:6px}
      footer{height:14px;flex:none;line-height:12px;display:flex;justify-content:center;position:relative;white-space:nowrap}
      :host([launch]) footer{padding-right:8px}
      footer app-icon{position:absolute;right:3px;top:3px}`,
      `<div class="body"><slot></slot></div><footer>${this.getAttribute('label') || ''}${this.hasAttribute('launch') ? ic('launch', 6) : ''}</footer>`);
  }
}
customElements.define('ribbon-group', RibbonGroup);

class RibbonButton extends HTMLElement {
  connectedCallback() {
    if (this.shadowRoot) return;
    const c = this.getAttribute('caret');
    mount(this, `
      :host{display:block;width:var(--w);flex:none;text-align:center}
      :host([disabled]){color:#666}
      button{width:100%;display:flex;flex-direction:column;align-items:center;line-height:12px}
      .i{height:20px;display:flex;align-items:center;margin-bottom:3px}
      .c{height:12px;display:flex;align-items:center}`,
      `<button><span class="i">${ic(this.getAttribute('icon'), +this.getAttribute('size') || 20)}</span><span><slot></slot>${c === '' ? ' ' + ic('caret', 3) : ''}</span>${c === 'below' ? `<span class="c">${ic('caret', 3)}</span>` : ''}</button>`);
  }
}
customElements.define('ribbon-button', RibbonButton);

class StatusZoom extends HTMLElement {
  connectedCallback() {
    if (this.shadowRoot) return;
    mount(this, `
      :host{display:flex;align-items:center;height:100%;margin-left:auto}
      .v{width:28px;height:100%;display:grid;place-items:center}.v.on{background:#292929}
      .f{display:flex;gap:3px;align-items:center;margin-right:9px}
      .z{width:12px;text-align:center;font-size:11px;line-height:10px}
      .out{margin-left:8px}
      input{appearance:none;width:72px;height:14px;margin:0;background:linear-gradient(#9a9a9a,#9a9a9a) center/100% 1px no-repeat}
      input::-webkit-slider-thumb{appearance:none;width:3px;height:11px;background:#c2c2c2}
      .p{width:30px;text-align:right;padding-right:6px}`,
      `${this.hasAttribute('focus') ? `<button class="f">${ic('focus', 10)}Focus</button>` : ''}
       ${this.getAttribute('views').split(' ').map((v, i) => `<button class="v ${i === +this.getAttribute('on') ? 'on' : ''}" aria-label="${v}">${ic(v, 10)}</button>`).join('')}
       <button class="z out" aria-label="Zoom arrière">−</button><input type="range" min="0" max="100" value="${this.getAttribute('pos')}" aria-label="Zoom"><button class="z" aria-label="Zoom avant">+</button><span class="p">${this.getAttribute('value')}</span>`);
  }
}
customElements.define('status-zoom', StatusZoom);

/* ---------- Word ---------- */
const rb = (icon, label, w, caret, extra = '') => `<ribbon-button icon="${icon}" style="--w:${w}px" ${caret === 1 ? 'caret' : caret === 2 ? 'caret="below"' : ''} ${extra}>${label}</ribbon-button>`;
const rg = (label, w, body, extra = '') => `<ribbon-group label="${label}" style="--w:${w}px" ${extra}>${body}</ribbon-group>`;
const statusCss = `.status{display:flex;align-items:center;height:16px;flex:none;background:#141414;border-top:1px solid #3a3a3a;color:#e2e2e2;padding-left:8px;white-space:nowrap}.status b{font-family:Roboto,sans-serif;font-weight:700;display:flex;gap:3px;align-items:center}`;

class WordWindow extends HTMLElement {
  constructor() {
    super();
    mount(this, `
      :host{display:flex;flex-direction:column;background:#0a0a0a;min-width:0}
      office-title{--left:638px}ribbon-tabs{--accent:#7ba0f0}
      .gap{margin-left:var(--g)}
      .side{width:76px;display:flex;flex-direction:column;padding-top:0}
      .side button{display:flex;align-items:center;gap:4px;height:19px;line-height:12px}
      .side button:first-child{height:12px;margin-bottom:3px}
      .doc{flex:1;min-height:0;display:grid;grid-template-columns:224fr 905fr 237fr}
      article{grid-column:2;background:#252525;border:solid #5c5c5c;border-width:0 1px;padding:9px 106px 0 108px;color:#c9c9c9;font-family:Lato,sans-serif;overflow:hidden}
      .run{margin:0 0 26px;padding-right:40px;text-align:center;font-size:18px;line-height:20px;font-variant:small-caps;color:#b5b5b5}
      h1{margin:0;font-weight:400;font-size:24px;line-height:32px;color:#b9c4dc}
      hr{border:0;border-top:1px solid #777;margin:47px 0 38px}
      h2{margin:0;font-size:16px;line-height:20px;font-variant:small-caps;font-weight:700;display:flex;gap:12px;color:#c5cbd6}
      h2 a{color:#e8aab4;text-decoration:underline}${statusCss}.status span{margin-right:13px}`,
      `<office-title><app-icon slot="logo" name="word" size="12"></app-icon>
        ${ic('save', 12)}<span class="gap" style="--g:9px"></span>${ic('undo', 12)}<span class="gap" style="--g:4px"></span>${ic('caret', 3)}<span class="gap" style="--g:8px"></span>${ic('repeat', 12)}<span class="gap" style="--g:11px"></span>${ic('more', 5)}<span class="gap" style="--g:18px">DHAIMI_Vincent_TFE_Département_Technique_Namur.docx&nbsp; •&nbsp; Enregistré&nbsp;</span>${ic('chevdown', 4)}</office-title>
      <ribbon-tabs selected="Insertion" tabs="Fichier|Accueil|Insertion|Dessin|Conception|Mise en page|Références|Publipostage|Révision|Affichage|Aide">
        <pill-button icon="bubble" style="--w:81px">Commentaires</pill-button><pill-button icon="pen" caret style="--w:82px">Modification</pill-button><pill-button icon="share" caret fill style="--w:71px;--fill:#7ba6f7">Partager</pill-button></ribbon-tabs>
      <ribbon-bar>
        ${rg('Pages', 111, rb('cover', 'Page de<br>garde', 33, 1) + rb('blank', 'Page<br>vierge', 33) + rb('pagebreak', 'Saut de<br>page', 33))}
        ${rg('Tableaux', 43, rb('table', 'Tableau', 40, 2))}
        ${rg('Illustrations', 261, rb('image', 'Images', 34, 2) + rb('shapes', 'Formes', 32, 2) + rb('icons', 'Icônes', 33) + rb('cube', 'Modèles<br>3D', 36, 1) + rb('smartart', 'SmartArt', 40) + rb('chart', 'Graphique', 42) + rb('capture', 'Capture', 38, 2))}
        ${rg('Média', 44, rb('video', 'Vidéos<br>en ligne', 40))}
        ${rg('Liens', 104, rb('link', 'Lien', 32, 2) + rb('bookmark', 'Signet', 32) + rb('crossref', 'Renvoi', 32))}
        ${rg('Commentaires', 67, rb('comment', 'Commentaire', 60))}
        ${rg('En-tête et pied de page', 117, rb('header', 'En-<br>tête', 31, 1) + rb('footer', 'Pied de<br>page', 33, 1) + rb('pagenum', 'Numéro<br>de page', 42, 1))}
        ${rg('Texte', 232, rb('textbox', 'Zone de<br>texte', 38, 1) + rb('quick', 'QuickPart', 40, 2) + rb('wordart', 'WordArt', 38, 2) + rb('dropcap', 'Lettrine', 34, 2, 'disabled') + `<div class="side"><button>${ic('sign', 11)}Signature&nbsp;&nbsp;&nbsp;${ic('caret', 3)}</button><button>${ic('datetime', 11)}Date et heure</button><button>${ic('object', 11)}Objet&nbsp;&nbsp;&nbsp;${ic('caret', 3)}</button></div>`)}
        ${rg('Symboles', 86, rb('pi', 'Équation', 38, 2) + rb('omega', 'Symbole', 38, 2))}
      </ribbon-bar>
      <div class="doc"><article><p class="run">les plates-formes DELL VxRail</p><h1>Annexes</h1><hr><h2><span>1.</span><span>Plan d’adressage – <a href="#archive">Lien d’archive</a></span></h2></article></div>
      <div class="status"><span>Page 22 sur 22</span><span>2806 mots</span><span>${ic('proof', 10)}</span><span>Français (Belgique)</span><span>Saisie semi-automatique : activée</span><b>${ic('access', 10)}Accessibilité : consultez nos recommandations</b><status-zoom focus views="read print web" on="1" pos="57" value="160%"></status-zoom></div>`);
  }
}
customElements.define('word-window', WordWindow);

/* ---------- Excel ---------- */
const COLS = ['A', 'B', 'C', 'D', 'E', 'F', 'G', 'H', 'I', 'J', 'K', 'L', 'M', 'N', 'O', 'P', 'Q', 'R', 'S', ''];
const DATA = {
  2: ['Vlan ID :', '200', '210', '220', '1-100', '800'],
  3: ['Nom :', 'ESXI Management', 'iDrac Management', 'Infra Management', 'VM Data Trafic', 'vSan Network'],
  4: ['Plage IP :', '10.0.20.0/24', '10.0.21.0/24', '10.0.22.0/24', '10.0.X.0/24', '172.10.80.0/24'],
  5: ['GW :', '10.0.20.1/24', '10.0.21.1/24', '10.0.22.1/24', '10.0.X.1/24', '172.10.80.1/24'],
  6: ['DNS server :', '', '', '10.0.22.5<br>10.0.22.6', '', ''],
  7: ['Switch :', 'Management', 'Management', 'Management', 'Data', 'Data'],
  8: ['Domain :', 'infra.vinc.stage', 'infra.vinc.stage', 'vinc.stage', '', ''],
};
class SheetGrid extends HTMLElement {
  constructor() {
    super();
    const fixed = { A: 63, B: 64, C: 89, D: 94, E: 94, F: 76, G: 81, '': 18 };
    let body = '';
    for (let r = 1; r <= 40; r++) {
      body += `<tr class="r${r}"><th scope="row">${r}</th>` + COLS.map((c, i) => {
        const v = DATA[r] && i >= 1 && i <= 6 ? DATA[r][i - 1] : null;
        if (v === null) return `<td></td>`;
        return `<td class="k ${v ? 'g' : ''} ${i === 1 ? 'l' : ''} ${r === 8 && (i === 2 || i === 4) ? 'h' : ''}">${v}</td>`;
      }).join('') + '</tr>';
    }
    mount(this, `
      :host{display:flex;min-height:0;background:#0a0a0a;overflow:hidden;font-size:10px}
      .wrap{flex:1;min-width:0;overflow:hidden;background:#fff}
      table{border-collapse:collapse;table-layout:fixed;width:100%;height:654px}
      th{font-weight:400;background:#0a0a0a;color:#d8d8d8;padding:0;line-height:12px;border:1px solid #555}
      thead th{height:16px;border-width:0 1px;border-bottom:1px solid #777}
      tbody th{border-width:1px 0;vertical-align:bottom}
      thead th:first-child{background:linear-gradient(135deg,transparent 50%,#6e6e6e 50%) 8px 4px/10px 10px no-repeat #0a0a0a}
      tr{height:15px}.r6{height:30px}
      td{border:1px solid #dedede;padding:0;text-align:center;line-height:12px;white-space:nowrap;color:#111}
      .r6 td{line-height:15px}
      .k{border-color:#000}.g{background:#00b050}.h{background:#4eb075}.l{text-align:left;padding-left:2px}
      .bar{width:15px;padding:4px 2px;display:flex;flex-direction:column;align-items:center;gap:2px}
      .bar i{width:0;border:4px solid transparent;border-top:0;border-bottom:5px solid #a5a5a5}
      .bar b{width:8px;flex:0 1 88%;border-radius:4px;background:#9d9d9d}
      .bar i:last-child{transform:rotate(180deg);margin-top:auto}`,
      `<div class="wrap"><table aria-label="Générale"><colgroup><col style="width:20px">${COLS.map(c => c in fixed ? `<col style="width:${fixed[c]}px">` : '<col>').join('')}</colgroup>
        <thead><tr><th></th>${COLS.map(c => `<th scope="col">${c}</th>`).join('')}</tr></thead><tbody>${body}</tbody></table></div>
      <div class="bar"><i></i><b></b><i></i></div>`);
  }
}
customElements.define('sheet-grid', SheetGrid);

class ExcelWindow extends HTMLElement {
  constructor() {
    super();
    const b = (n, w = 18, c = '', s = 11) => `<button class="t ${c}" style="width:${w}px" aria-label="${n}">${ic(n, s)}</button>`;
    const car = (w = 10) => `<button class="t" style="width:${w}px" aria-label="Options">${ic('caret', 3)}</button>`;
    mount(this, `
      :host{display:flex;flex-direction:column;background:#0a0a0a;min-width:0}
      office-title{--left:522px}ribbon-tabs{--accent:#4eb27c;--gap:15px}
      .gap{margin-left:var(--g)}
      .col{display:flex;flex-direction:column}
      .row{display:flex;align-items:center;height:17px}
      .row+.row{margin-top:6px}
      .t{height:17px;display:grid;place-items:center}
      .t.on{border:1px solid #a0a0a0;border-radius:3px;background:#383838}
      .s{width:1px;height:17px;background:#5e5e5e;flex:none}
      .pick{position:relative;display:block}
      .pick app-icon{position:absolute;right:4px;top:5px;pointer-events:none}
      select{appearance:none;height:17px;width:100%;border:1px solid #7a7a7a;border-radius:3px;background:#292929;color:#eee;font:8px "Open Sans",sans-serif;padding:0 2px}
      .mini{margin-top:-4px}.mini .row{height:18px;margin:0}
      .txt{display:flex;align-items:center;gap:4px;height:17px}
      sheet-grid{flex:1}
      .sheets{display:flex;height:23px;flex:none;border-top:1px solid #444;align-items:center;color:#e8e8e8;font-size:9px;padding:0 13px 0 10px}
      .sheets button{padding:0 10px;height:13px;line-height:13px;border-right:1px solid #555}
      .sheets .nav{border:0;width:23px;padding:0;color:#999}
      .sheets .cur{background:#fff;color:#222;font-weight:600;height:20px;align-self:flex-start;border-radius:0 0 4px 4px;border:0;padding:0 6px;margin:0 0 0 26px}
      .cur span{display:block;height:17px;line-height:18px;border-bottom:2px solid #107c41}
      .sheets .add{border:0;padding:0 29px}
      .sc{flex:0 0 516px;height:13px;border-radius:6px;background:#1b1b1b;display:flex;align-items:center;padding:0 4px;gap:3px;margin-left:8px}
      .sc i{height:0;border:4px solid transparent;border-left:0;border-right:5px solid #777}
      .sc i:last-child{transform:rotate(180deg)}
      .sc b{flex:1;height:7px;border-radius:4px;background:#9d9d9d}
      .more{margin-left:auto}
      ${statusCss}.status span{margin-right:14px}`,
      `<office-title><app-icon slot="logo" name="excel" size="12"></app-icon>
        ${ic('save', 12)}<span class="gap" style="--g:9px"></span>${ic('undo', 12)}<span class="gap" style="--g:4px"></span>${ic('caret', 3)}<span class="gap" style="--g:8px"></span>${ic('redo', 12)}<span class="gap" style="--g:4px"></span>${ic('caret', 3)}<span class="gap" style="--g:8px"></span>${ic('record', 12)}<span class="gap" style="--g:12px"></span>${ic('more', 5)}<span class="gap" style="--g:18px">Plan d'adressage.xlsx&nbsp;&nbsp;</span>${ic('people', 9)}<span>&nbsp;&nbsp;•&nbsp; Enregistré&nbsp;</span>${ic('chevdown', 4)}</office-title>
      <ribbon-tabs selected="Accueil" tabs="Fichier|Accueil|Insertion|Mise en page|Formules|Données|Révision|Affichage|Automate|Aide">
        <pill-button icon="bubble" style="--w:84px">Commentaires</pill-button><pill-button icon="share" caret fill style="--w:70px;--fill:#3aa862">Partager</pill-button></ribbon-tabs>
      <ribbon-bar>
        ${rg('Presse-papiers', 73, rb('paste', 'Coller', 32, 2, 'size="21"') + `<div class="col mini"><div class="row">${b('cut')}</div><div class="row">${b('copy')}${car()}</div><div class="row">${b('painter')}</div></div>`, 'launch')}
        ${rg('Police', 168, `<div class="col"><div class="row" style="gap:2px;margin-top:2px"><label class="pick" style="width:86px"><select aria-label="Police"><option>Trebuchet MS</option></select>${ic('caret', 3)}</label><label class="pick" style="width:30px"><select aria-label="Taille"><option>11</option></select>${ic('caret', 3)}</label>${b('growfont')}${b('shrinkfont')}</div>
          <div class="row"><button class="t" style="width:16px;font-size:11px"><b>G</b></button><button class="t" style="width:20px;font:italic 11px 'Liberation Serif',serif">I</button><button class="t" style="width:17px;font-size:11px"><u>S</u></button>${car()}<span class="s"></span>${b('borders', 20)}${car()}<span class="s"></span>${b('fill', 20)}${car()}${b('fontcolor', 20)}${car()}</div></div>`, 'launch')}
        ${rg('Alignement', 278, `<div class="col"><div class="row" style="margin-top:2px">${b('vtop')}${b('vmid')}${b('vbot', 18, 'on')}<span class="s"></span>${b('orient', 20)}${car(12)}</div><div class="row">${b('hleft')}${b('hcenter', 18, 'on')}${b('hright')}<span class="s"></span>${b('outdent', 20)}${b('indent')}</div></div><span class="s" style="height:44px;margin:2px 7px 0 4px"></span><div class="col"><div class="row" style="margin-top:2px"><button class="txt">${ic('wrap', 11)}Renvoyer à la ligne automatiquement</button></div><div class="row"><button class="txt">${ic('merge', 11)}Fusionner et centrer&nbsp;&nbsp;&nbsp;${ic('caret', 3)}</button></div></div>`, 'launch')}
        ${rg('Nombre', 115, `<div class="col"><div class="row" style="margin-top:2px"><label class="pick" style="width:104px"><select aria-label="Format de nombre"><option>Standard</option></select>${ic('caret', 3)}</label></div><div class="row">${b('money')}${car(9)}<button class="t" style="width:22px;font-size:13px">%</button><button class="t" style="width:17px;font-size:7px">000</button><span class="s"></span>${b('dec1')}${b('dec2')}</div></div>`, 'launch')}
        ${rg('Styles', 191, rb('condfmt', 'Mise en forme<br>conditionnelle', 70, 1) + rb('tablefmt', 'Mettre sous forme<br>de tableau', 72, 1) + rb('cellfmt', 'Styles de<br>cellules', 44, 1))}
        ${rg('Cellules', 118, rb('insert', 'Insérer', 37, 2) + rb('remove', 'Supprimer', 40, 2) + rb('format', 'Format', 36, 2))}
        ${rg('Édition', 131, `<div class="col mini">${['sum', 'filldown', 'erase'].map(n => `<div class="row">${b(n)}${car()}</div>`).join('')}</div>` + rb('sortfilter', 'Trier et<br>filtrer', 40, 1) + rb('find', 'Rechercher et<br>sélectionner', 56, 1))}
        ${rg('Confidentialité', 77, rb('sensitivity', 'Niveau de<br>confidentialité', 70, 1, 'disabled'))}
        ${rg('Compléments', 68, rb('addins', 'Compléments', 60))}
        ${rg('', 55, rb('analyze', 'Analyse de<br>données', 50, 0, 'size="22"'))}
      </ribbon-bar>
      <sheet-grid></sheet-grid>
      <div class="sheets"><button class="nav" aria-label="Précédent">‹</button><button class="nav" aria-label="Suivant">›</button><button class="cur"><span>Générale</span></button>${['Vlan 1-100', 'Vlan 200', 'Vlan 210', 'Vlan 220', 'Vlan 230', 'Vlan 800', 'Switch', 'LDAP'].map(t => `<button>${t}</button>`).join('')}<button class="add" aria-label="Nouvelle feuille">${ic('plus', 9)}</button><span class="more">⋮</span><div class="sc"><i></i><b></b><i></i></div></div>
      <div class="status"><span>Prêt</span><b>${ic('access', 10)}Accessibilité : consultez nos recommandations</b><status-zoom views="gridv print breakv" on="0" pos="50" value="100%"></status-zoom></div>`);
  }
}
customElements.define('excel-window', ExcelWindow);
</script>
</body>
</html>
